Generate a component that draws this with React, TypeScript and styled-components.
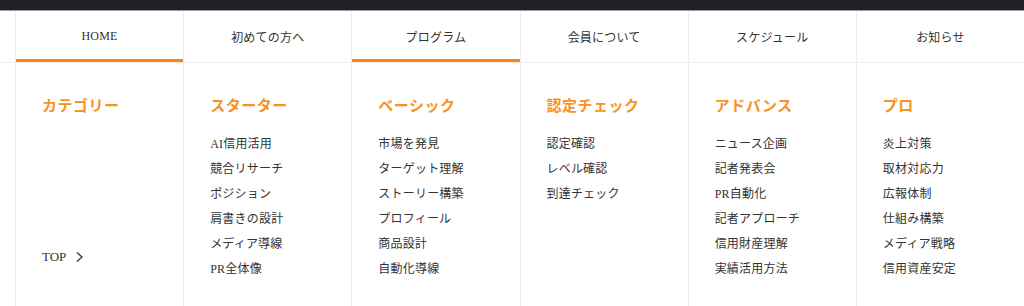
import React from 'react'
import styled, { createGlobalStyle } from 'styled-components'

const GlobalStyle = createGlobalStyle`
  html, body {
    margin: 0;
    padding: 0;
    background: #fff;
  }
  body {
    font-family: "Liberation Serif", "Noto Sans CJK JP", serif;
    color: #333;
  }
`

const navItems = [
  { label: 'HOME', active: true },
  { label: '初めての方へ', active: false },
  { label: 'プログラム', active: true },
  { label: '会員について', active: false },
  { label: 'スケジュール', active: false },
  { label: 'お知らせ', active: false },
]

const columns = [
  { title: 'スターター', links: ['AI信用活用', '競合リサーチ', 'ポジション', '肩書きの設計', 'メディア導線', 'PR全体像'] },
  { title: 'ベーシック', links: ['市場を発見', 'ターゲット理解', 'ストーリー構築', 'プロフィール', '商品設計', '自動化導線'] },
  { title: '認定チェック', links: ['認定確認', 'レベル確認', '到達チェック'] },
  { title: 'アドバンス', links: ['ニュース企画', '記者発表会', 'PR自動化', '記者アプローチ', '信用財産理解', '実績活用方法'] },
  { title: 'プロ', links: ['炎上対策', '取材対応力', '広報体制', '仕組み構築', 'メディア戦略', '信用資産安定'] },
]

export default function App() {
  return (
    <>
      <GlobalStyle />
      <Page>
        <TopBar />
        <NavRow>
          <Nav>
            {navItems.map((item) => (
              <NavItem key={item.label} $active={item.active}>
                {item.label}
              </NavItem>
            ))}
          </Nav>
        </NavRow>
        <Menu>
          <Column>
            <Heading>カテゴリー</Heading>
            <TopLink>
              TOP
              <svg width="9" height="12" viewBox="0 0 9 12">
                <path d="M2 1.5 L7 6 L2 10.5" fill="none" stroke="#333" strokeWidth="1.3" />
              </svg>
            </TopLink>
          </Column>
          {columns.map((col) => (
            <Column key={col.title}>
              <Heading>{col.title}</Heading>
              <LinkList>
                {col.links.map((link) => (
                  <LinkItem key={link}>{link}</LinkItem>
                ))}
              </LinkList>
            </Column>
          ))}
        </Menu>
      </Page>
    </>
  )
}

const Page = styled.div`
  width: 1024px;
  height: 306px;
  overflow: hidden;
  display: flex;
  flex-direction: column;
`

const TopBar = styled.div`
  height: 10px;
  background: #1f2327;
  border-bottom: 1px solid #9a9a9a;
`

const NavRow = styled.div`
  padding-left: 15px;
  border-bottom: 1px solid #eeeeee;
`

const Nav = styled.nav`
  display: grid;
  grid-template-columns: repeat(6, 1fr);
  height: 51px;
`

const NavItem = styled.div<{ $active: boolean }>`
  display: flex;
  align-items: center;
  justify-content: center;
  border-left: 1px solid #eeeeee;
  font-size: 12px;
  letter-spacing: 0.2px;
  color: #333;
  box-shadow: ${(p) => (p.$active ? 'inset 0 -3px 0 #ff7f0f' : 'none')};
`

const Menu = styled.div`
  flex: 1;
  display: grid;
  grid-template-columns: repeat(6, 1fr);
  margin-left: 15px;
`

const Column = styled.div`
  border-left: 1px solid #eeeeee;
  padding: 31px 0 0 26px;
  display: flex;
  flex-direction: column;
`

const Heading = styled.h3`
  margin: 0;
  font-size: 15px;
  line-height: 24px;
  font-weight: 700;
  color: #f7921e;
  letter-spacing: 0.5px;
`

const LinkList = styled.ul`
  list-style: none;
  margin: 14px 0 0;
  padding: 0;
`

const LinkItem = styled.li`
  font-size: 12px;
  line-height: 25px;
  letter-spacing: 0.2px;
  color: #333;
`

const TopLink = styled.div`
  margin-top: 126px;
  display: flex;
  align-items: center;
  gap: 9px;
  font-size: 13px;
  line-height: 25px;
  color: #333;
`
